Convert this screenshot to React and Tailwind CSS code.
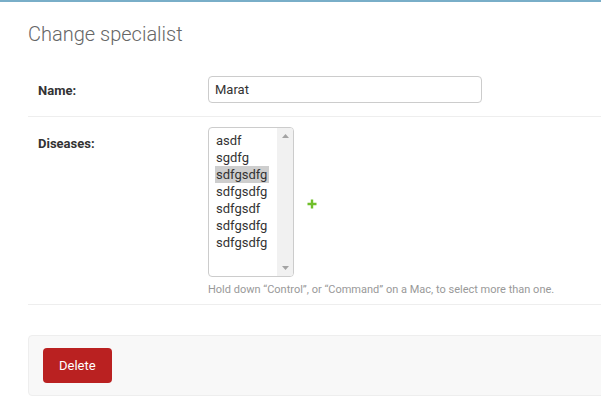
import React from "react";

const options = ["asdf", "sgdfg", "sdfgsdfg", "sdfgsdfg", "sdfgsdf", "sdfgsdfg", "sdfgsdfg"];

export default function App() {
  return (
    <div className="w-[601px] h-[413px] overflow-hidden bg-white font-['Roboto',sans-serif] text-[#333]">
      <div className="h-[2px] bg-[#79aec8]" />
      <div className="pl-[28px]">
        <h1 className="mt-[20px] text-[20px] leading-[24px] font-light text-[#666]">Change specialist</h1>
        <div className="mt-[20px] mr-[-20px]">
          <div className="flex pl-[10px] pt-[10px] pb-[13px] border-b border-[#eee]">
            <label className="w-[170px] pt-[5px] text-[13px] font-bold text-[#333]">Name:</label>
            <div className="w-[274px] h-[27px] rounded-[4px] border border-[#ccc] px-[6px] text-[13px] leading-[25px] text-[#333]">
              Marat
            </div>
          </div>
          <div className="flex pl-[10px] pt-[10px] pb-[7px] border-b border-[#eee]">
            <label className="w-[170px] pt-[9px] text-[13px] font-bold text-[#333] leading-[16px]">Diseases:</label>
            <div className="flex flex-col">
              <div className="flex items-center">
                <div className="w-[86px] h-[150px] rounded-[4px] border border-[#ccc] flex overflow-hidden">
                  <div className="flex-1 pt-[4px] pl-[6px]">
                    {options.map((o, i) => (
                      <div key={i} className="text-[13px] leading-[17px] text-[#333]">
                        <span className={"inline-block pl-[1px] pr-[2px] " + (i === 2 ? "bg-[#cecece]" : "")}>{o}</span>
                      </div>
                    ))}
                  </div>
                  <div className="w-[16px] bg-[#f1f1f1] flex flex-col justify-between items-center py-[6px]">
                    <svg width="7" height="4" viewBox="0 0 7 4"><path d="M0 4 L3.5 0 L7 4 Z" fill="#a3a3a3" /></svg>
                    <svg width="7" height="4" viewBox="0 0 7 4"><path d="M0 0 L3.5 4 L7 0 Z" fill="#a3a3a3" /></svg>
                  </div>
                </div>
                <svg className="ml-[13px] mt-[4px]" width="10" height="10" viewBox="0 0 10 10">
                  <path d="M3.8 0.5h2.4v3.3h3.3v2.4h-3.3v3.3h-2.4v-3.3h-3.3v-2.4h3.3z" fill="#70bf2b" />
                </svg>
              </div>
              <div className="mt-[6px] text-[11px] leading-[14px] text-[#999]">
                Hold down “Control”, or “Command” on a Mac, to select more than one.
              </div>
            </div>
          </div>
          <div className="mt-[30px] h-[61px] rounded-[4px] border border-[#eee] bg-[#f8f8f8] pl-[14px] pt-[12px]">
            <button className="h-[35px] px-[16px] rounded-[4px] bg-[#ba2121] text-white text-[13px] leading-[35px]">
              Delete
            </button>
          </div>
        </div>
      </div>
    </div>
  );
}
